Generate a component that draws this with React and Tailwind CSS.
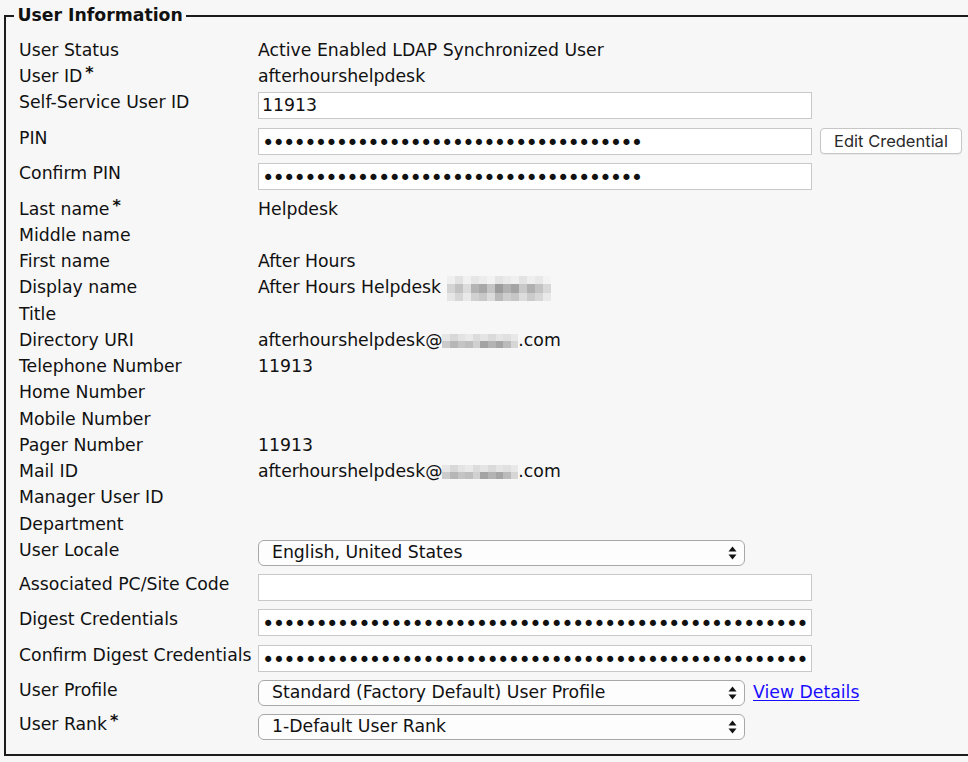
import React from 'react';

const font = "font-['DejaVu_Sans',Verdana,sans-serif]";

const blurA = [
  ['bg-[#efefef]', 'bg-[#e2e2e2]', 'bg-[#f1f1f1]', 'bg-[#e6e6e6]', 'bg-[#ececec]', 'bg-[#f2f2f2]', 'bg-[#e4e4e4]', 'bg-[#eaeaea]', 'bg-[#f0f0f0]', 'bg-[#e3e3e3]', 'bg-[#eeeeee]', 'bg-[#e8e8e8]', 'bg-[#f3f3f3]'],
  ['bg-[#d4d4d4]', 'bg-[#c2c2c2]', 'bg-[#dcdcdc]', 'bg-[#b4b4b4]', 'bg-[#a8a8a8]', 'bg-[#c5c5c5]', 'bg-[#9c9c9c]', 'bg-[#b2b2b2]', 'bg-[#a4a4a4]', 'bg-[#c9c9c9]', 'bg-[#b0b0b0]', 'bg-[#c3c3c3]', 'bg-[#d8d8d8]'],
  ['bg-[#e6e6e6]', 'bg-[#d6d6d6]', 'bg-[#e9e9e9]', 'bg-[#d1d1d1]', 'bg-[#c8c8c8]', 'bg-[#dbdbdb]', 'bg-[#bababa]', 'bg-[#cecece]', 'bg-[#c6c6c6]', 'bg-[#dcdcdc]', 'bg-[#cbcbcb]', 'bg-[#d7d7d7]', 'bg-[#e9e9e9]'],
];

const blurB = [
  ['bg-[#e6e6e6]', 'bg-[#d8d8d8]', 'bg-[#e3e3e3]', 'bg-[#e9e9e9]', 'bg-[#dcdcdc]', 'bg-[#e4e4e4]', 'bg-[#dadada]', 'bg-[#e5e5e5]', 'bg-[#e0e0e0]', 'bg-[#e8e8e8]'],
  ['bg-[#cbcbcb]', 'bg-[#b6b6b6]', 'bg-[#c4c4c4]', 'bg-[#bebebe]', 'bg-[#d0d0d0]', 'bg-[#a3a3a3]', 'bg-[#b3b3b3]', 'bg-[#a5a5a5]', 'bg-[#bbbbbb]', 'bg-[#d6d6d6]'],
];

const Pixels = ({ grid, cell }) => (
  <span className="inline-flex flex-col align-middle">
    {grid.map((row, i) => (
      <span key={i} className="flex">
        {row.map((c, j) => (
          <span key={j} className={`block ${cell} ${c}`} />
        ))}
      </span>
    ))}
  </span>
);

const Star = () => (
  <span className="relative -top-[4px] ml-[3px] text-[16px] font-bold">*</span>
);

const TextRow = ({ label, star, children }) => (
  <div className="flex h-[26.25px] items-center">
    <div className="w-[239px] shrink-0 whitespace-nowrap">
      {label}
      {star && <Star />}
    </div>
    <div className="flex items-center whitespace-nowrap">{children}</div>
  </div>
);

// label sits at the row top, controls get 2px above and the rest below
const FieldRow = ({ label, star, pb = 'pb-[6.5px]', children }) => (
  <div className="flex items-start">
    <div className="w-[239px] shrink-0 h-[26px] flex items-center whitespace-nowrap">
      {label}
      {star && <Star />}
    </div>
    <div className={`flex items-start gap-[8px] pt-[2px] ${pb}`}>{children}</div>
  </div>
);

const Box = ({ children }) => (
  <div className="w-[554px] h-[27px] bg-white border border-[#c9c9c9] pl-[3px] flex items-center overflow-hidden whitespace-nowrap">
    {children}
  </div>
);

const Dots = ({ n, wide }) => (
  <span className={`relative top-[2px] text-[21px] leading-none ${wide ? 'tracking-[-1.7px]' : 'tracking-[-1.85px]'}`}>
    {'•'.repeat(n)}
  </span>
);

const Select = ({ value }) => (
  <div className="w-[487px] h-[26px] bg-[#fdfdfd] border border-[#a8a8a8] rounded-[6px] pl-[13px] pr-[7px] flex items-center justify-between">
    <span className="whitespace-nowrap">{value}</span>
    <svg width="9" height="14" viewBox="0 0 9 14" className="shrink-0">
      <path d="M4.5 0.5 L8.5 5.5 L0.5 5.5 Z" fill="#111" />
      <path d="M4.5 13.5 L8.5 8.5 L0.5 8.5 Z" fill="#111" />
    </svg>
  </div>
);

export default function App() {
  return (
    <div className={`w-[968px] h-[762px] overflow-hidden bg-[#f7f7f7] text-[#111] text-[17.3px] ${font}`}>
      <fieldset className="ml-[4px] mt-[5px] w-[1000px] border-2 border-[#1c1c1c]">
        <legend className="ml-[8px] px-[3.5px] font-bold leading-[21px] text-[17.3px]">User Information</legend>
        <div className="pl-[13px] pt-[11.5px] pb-[8px]">
          <TextRow label="User Status">Active Enabled LDAP Synchronized User</TextRow>
          <TextRow label="User ID" star>afterhourshelpdesk</TextRow>
          <FieldRow label="Self-Service User ID">
            <Box>11913</Box>
          </FieldRow>
          <FieldRow label="PIN">
            <Box><Dots n={36} /></Box>
            <button className="w-[142px] h-[26px] bg-white border border-[#c6c6c6] rounded-[4px] text-[16.5px] text-[#2a2a2a] font-['Inter','Liberation_Sans',sans-serif] shadow-[0_1px_1px_rgba(0,0,0,0.06)]">
              Edit Credential
            </button>
          </FieldRow>
          <FieldRow label="Confirm PIN">
            <Box><Dots n={36} /></Box>
          </FieldRow>
          <TextRow label="Last name" star>Helpdesk</TextRow>
          <TextRow label="Middle name" />
          <TextRow label="First name">After Hours</TextRow>
          <TextRow label="Display name">
            After Hours Helpdesk
            <span className="ml-[6px]">
              <Pixels grid={blurA} cell="w-[8px] h-[8.5px]" />
            </span>
          </TextRow>
          <TextRow label="Title" />
          <TextRow label="Directory URI">
            afterhourshelpdesk@
            <Pixels grid={blurB} cell="w-[7.6px] h-[7px]" />
            .com
          </TextRow>
          <TextRow label="Telephone Number">11913</TextRow>
          <TextRow label="Home Number" />
          <TextRow label="Mobile Number" />
          <TextRow label="Pager Number">11913</TextRow>
          <TextRow label="Mail ID">
            afterhourshelpdesk@
            <Pixels grid={blurB} cell="w-[7.6px] h-[7px]" />
            .com
          </TextRow>
          <TextRow label="Manager User ID" />
          <TextRow label="Department" />
          <FieldRow label="User Locale" pb="pb-[6px]">
            <Select value="English, United States" />
          </FieldRow>
          <FieldRow label="Associated PC/Site Code">
            <Box />
          </FieldRow>
          <FieldRow label="Digest Credentials">
            <Box><Dots n={51} wide /></Box>
          </FieldRow>
          <FieldRow label="Confirm Digest Credentials">
            <Box><Dots n={51} wide /></Box>
          </FieldRow>
          <FieldRow label="User Profile" pb="pb-[6px]">
            <Select value="Standard (Factory Default) User Profile" />
            <a href="#" className="h-[26px] flex items-center text-[#1a0dff] underline underline-offset-2">View Details</a>
          </FieldRow>
          <FieldRow label="User Rank" star pb="pb-[6px]">
            <Select value="1-Default User Rank" />
          </FieldRow>
        </div>
      </fieldset>
    </div>
  );
}
